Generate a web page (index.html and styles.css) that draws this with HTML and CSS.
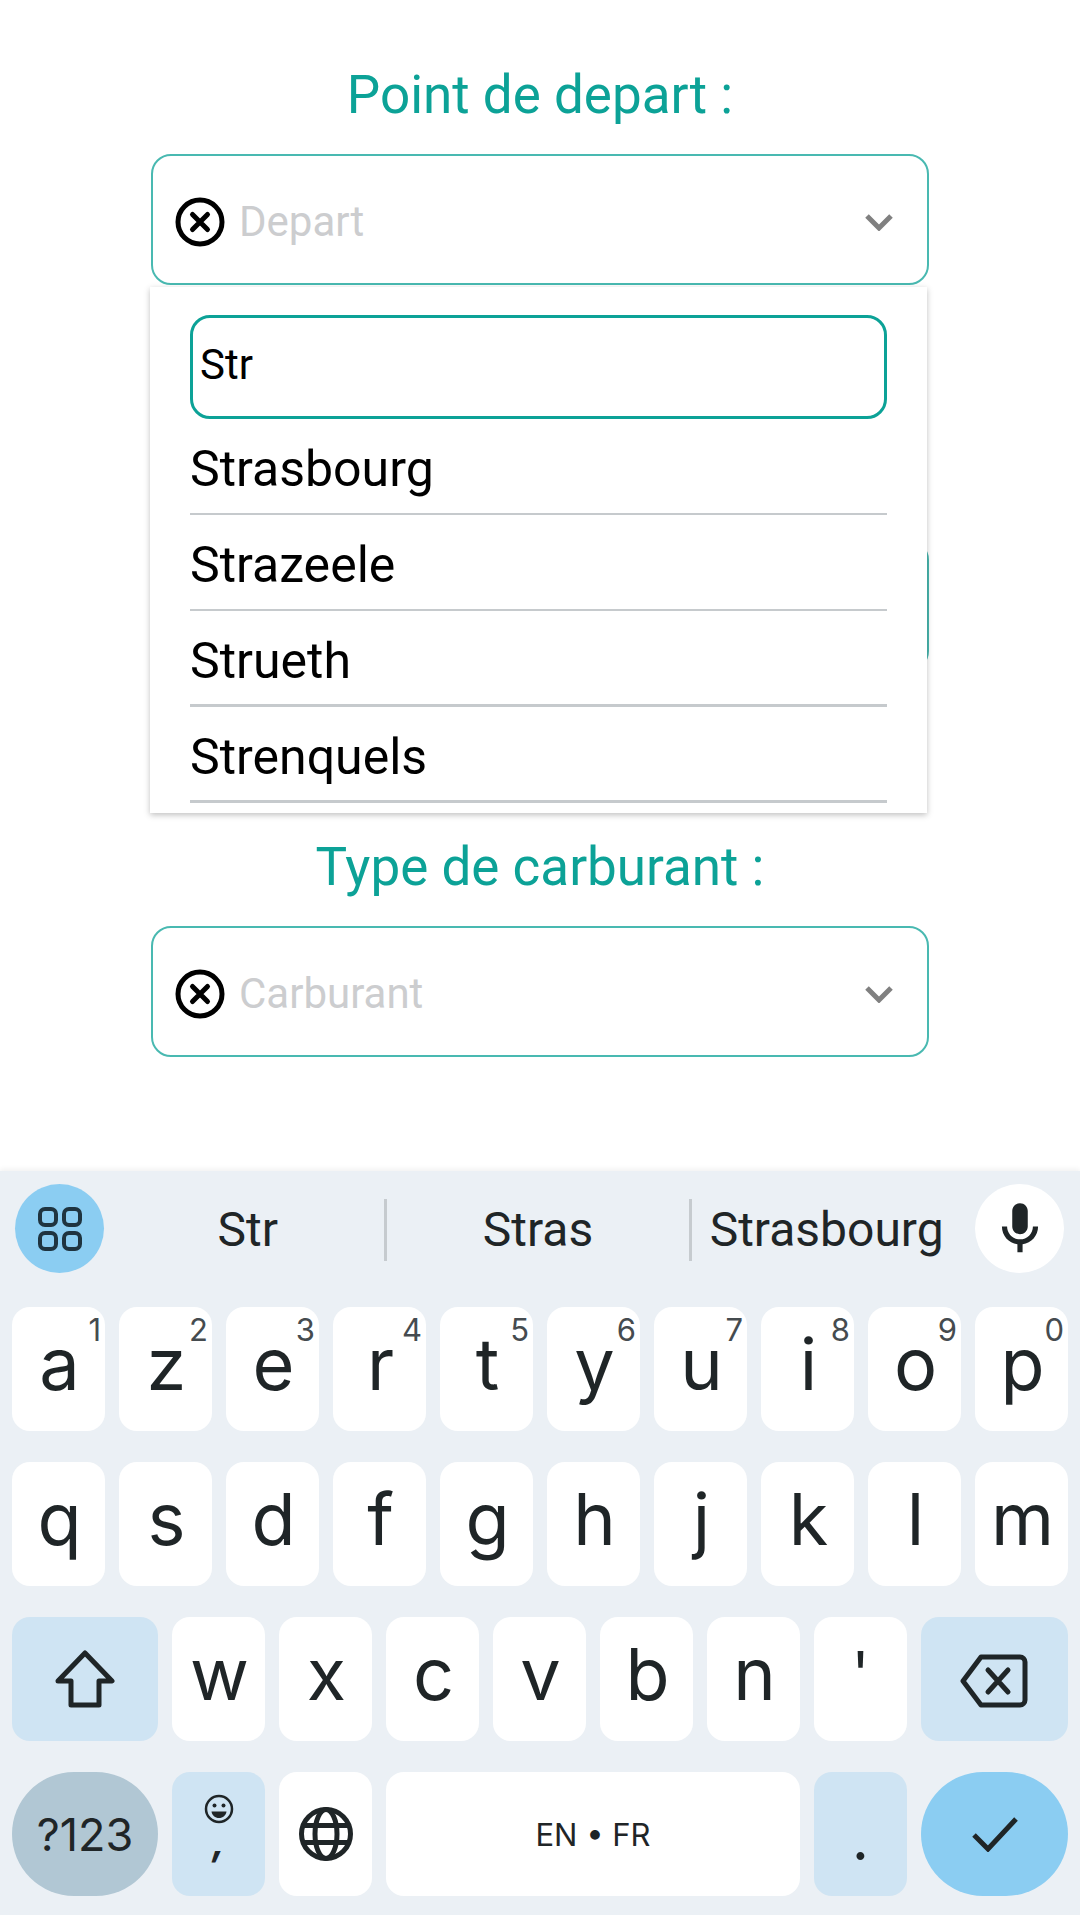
FILE: index.html
```html
<!DOCTYPE html>
<html>
  <head>
    <title>Point de depart</title>
    <link rel="stylesheet" href="styles.css">
  </head>
  <body>
    <main class="form">
      <section class="group group-depart">
        <h2 class="label">Point de depart :</h2>
        <div class="field">
          <svg class="clear" viewBox="0 0 50 50"><circle cx="25" cy="25" r="22" /><path d="M17.5 17.5l15 15M32.5 17.5l-15 15" /></svg>
          <span class="placeholder">Depart</span>
          <svg class="chevron" viewBox="0 0 30 18"><path d="M3 3l12 12L27 3" /></svg>
        </div>
      </section>
      <section class="group group-arrivee">
        <div class="field">
          <span class="placeholder"></span>
        </div>
      </section>
      <section class="group group-carburant">
        <h2 class="label">Type de carburant :</h2>
        <div class="field">
          <svg class="clear" viewBox="0 0 50 50"><circle cx="25" cy="25" r="22" /><path d="M17.5 17.5l15 15M32.5 17.5l-15 15" /></svg>
          <span class="placeholder">Carburant</span>
          <svg class="chevron" viewBox="0 0 30 18"><path d="M3 3l12 12L27 3" /></svg>
        </div>
      </section>

      <div class="dropdown">
        <div class="search">Str</div>
        <div class="option">Strasbourg</div>
        <div class="option">Strazeele</div>
        <div class="option option-thick">Strueth</div>
        <div class="option option-thick">Strenquels</div>
      </div>
    </main>

    <div class="keyboard">
      <div class="suggestions">
        <div class="round round-apps">
          <svg class="icon-apps" viewBox="0 0 44 44"><rect x="2" y="2" width="16" height="16" rx="5" /><rect x="26" y="2" width="16" height="16" rx="5" /><rect x="2" y="26" width="16" height="16" rx="5" /><rect x="26" y="26" width="16" height="16" rx="5" /></svg>
        </div>
        <div class="word word-first">Str</div>
        <div class="word word-second">Stras</div>
        <div class="word word-third">Strasbourg</div>
        <div class="round round-mic">
          <svg class="icon-mic" viewBox="0 0 24 24"><path d="M12 14c1.66 0 3-1.34 3-3V5c0-1.66-1.34-3-3-3S9 3.34 9 5v6c0 1.66 1.34 3 3 3zm5-3c0 2.76-2.24 5-5 5s-5-2.24-5-5H5c0 3.53 2.61 6.43 6 6.92V21h2v-3.08c3.39-.49 6-3.39 6-6.92h-2z" /></svg>
        </div>
      </div>

      <div class="row">
        <div class="key">a<sup class="hint">1</sup></div>
        <div class="key">z<sup class="hint">2</sup></div>
        <div class="key">e<sup class="hint">3</sup></div>
        <div class="key">r<sup class="hint">4</sup></div>
        <div class="key">t<sup class="hint">5</sup></div>
        <div class="key">y<sup class="hint">6</sup></div>
        <div class="key">u<sup class="hint">7</sup></div>
        <div class="key">i<sup class="hint">8</sup></div>
        <div class="key">o<sup class="hint">9</sup></div>
        <div class="key">p<sup class="hint">0</sup></div>
      </div>
      <div class="row">
        <div class="key">q</div>
        <div class="key">s</div>
        <div class="key">d</div>
        <div class="key">f</div>
        <div class="key">g</div>
        <div class="key">h</div>
        <div class="key">j</div>
        <div class="key">k</div>
        <div class="key">l</div>
        <div class="key">m</div>
      </div>
      <div class="row">
        <div class="key key-wide key-mod">
          <svg class="icon-shift" viewBox="0 0 60 58"><path d="M30 3L57 31H44V55H16V31H3z" /></svg>
        </div>
        <div class="key">w</div>
        <div class="key">x</div>
        <div class="key">c</div>
        <div class="key">v</div>
        <div class="key">b</div>
        <div class="key">n</div>
        <div class="key key-apos">'</div>
        <div class="key key-wide key-mod">
          <svg class="icon-back" viewBox="0 0 68 54"><path d="M21 3H60a5 5 0 0 1 5 5V46a5 5 0 0 1-5 5H21L3 27z" /><path d="M28 16l20 22M48 16L28 38" /></svg>
        </div>
      </div>
      <div class="row">
        <div class="key key-wide key-pill key-sym">?123</div>
        <div class="key key-mod key-emoji">
          <svg class="icon-smile" viewBox="0 0 30 30"><circle cx="15" cy="15" r="13" /><circle class="solid" cx="10.5" cy="11.5" r="2" /><circle class="solid" cx="19.5" cy="11.5" r="2" /><path class="solid" d="M7.5 17.5h15c-.6 4-3.6 6.5-7.500 6.500s-6.900-2.500-7.500-6.500z" /></svg>
          <span class="comma">,</span>
        </div>
        <div class="key key-globe">
          <svg class="icon-globe" viewBox="0 0 54 54"><circle cx="27" cy="27" r="24.500" /><ellipse cx="27" cy="27" rx="11" ry="24.500" /><path d="M4 18.500h46M4 35.500h46" /></svg>
        </div>
        <div class="key key-space">EN • FR</div>
        <div class="key key-mod key-dot">.</div>
        <div class="key key-wide key-pill key-ok">
          <svg class="icon-check" viewBox="0 0 48 36"><path d="M3 19l14 14L45 3" /></svg>
        </div>
      </div>
    </div>
  </body>
</html>
```

FILE: styles.css
```css
* {
  box-sizing: border-box;
}
html,
body {
  margin: 0;
  height: 1915px;
  overflow: hidden;
}
body {
  display: flex;
  flex-direction: column;
  background: #fff;
  font-family: Roboto, sans-serif;
}

.form {
  position: relative;
  flex: none;
  height: 1171px;
  padding: 0 151px;
}
.label {
  margin: 0 0 29px;
  height: 60px;
  line-height: 60px;
  text-align: center;
  font-size: 53px;
  font-weight: 400;
  color: #0ca297;
}
.group-depart {
  padding-top: 65px;
}
.group-arrivee {
  padding-top: 255px;
}
.group-carburant {
  padding-top: 166px;
}
.field {
  display: flex;
  align-items: center;
  height: 131px;
  padding: 4px 33px 0 22px;
  border: 2px solid #49b9b1;
  border-radius: 20px;
}
.clear {
  width: 50px;
  height: 50px;
  margin-right: 14px;
  fill: none;
  stroke: #000;
  stroke-width: 5;
  stroke-linecap: round;
}
.placeholder {
  flex: 1;
  font-size: 42px;
  color: #cccdcf;
}
.chevron {
  width: 30px;
  height: 18px;
  fill: none;
  stroke: #808080;
  stroke-width: 5;
}

.dropdown {
  position: absolute;
  top: 287px;
  left: 150px;
  width: 777px;
  height: 526px;
  padding: 28px 40px 0;
  background: #fff;
  box-shadow: 0 2px 6px rgba(0, 0, 0, .25);
}
.search {
  height: 104px;
  padding-left: 7px;
  border: 3px solid #0ca297;
  border-radius: 20px;
  font-size: 42px;
  line-height: 94px;
  color: #000;
}
.option {
  height: 96px;
  padding-top: 21px;
  border-bottom: 2px solid #c6cacd;
  font-size: 50px;
  line-height: 58px;
  color: #000;
}
.option:first-of-type {
  height: 95px;
}
.option-thick {
  border-bottom-width: 3px;
}

.keyboard {
  flex: 1;
  padding: 13px 12px 0;
  background: #ebf0f5;
  box-shadow: 0 -2px 5px rgba(0, 0, 0, .06);
  color: #1f2527;
}
.suggestions {
  display: flex;
  align-items: center;
  height: 89px;
  margin-bottom: 34px;
  padding: 0 4px 0 3px;
}
.round {
  display: flex;
  align-items: center;
  justify-content: center;
  flex: none;
  width: 89px;
  height: 89px;
  border-radius: 50%;
}
.round-apps {
  background: #8bcdf2;
}
.round-mic {
  background: #fff;
}
.icon-apps {
  width: 44px;
  height: 44px;
  fill: none;
  stroke: #1f3440;
  stroke-width: 4;
}
.icon-mic {
  width: 62px;
  height: 62px;
  fill: #1f2527;
}
.word {
  height: 62px;
  margin-top: 2px;
  font-size: 48px;
  line-height: 62px;
  text-align: center;
}
.word-first {
  width: 283px;
  padding-left: 8px;
  border-right: 3px solid #c6cbcf;
}
.word-second {
  width: 306px;
  border-right: 3px solid #c6cbcf;
}
.word-third {
  width: 269px;
  margin-right: 14px;
}

.row {
  display: flex;
  gap: 14px;
  height: 124px;
  margin-bottom: 31px;
}
.key {
  position: relative;
  display: flex;
  flex-direction: column;
  align-items: center;
  justify-content: center;
  width: 93px;
  padding: 0 0 12px 2px;
  border-radius: 18px;
  background: #fff;
  font-family: Inter, sans-serif;
  font-size: 72px;
}
.key-wide,
.key-globe {
  padding: 0;
}
.key-wide {
  flex: none;
  width: 146px;
}
.key-wide:last-child {
  width: 147px;
}
.key-space {
  flex: 1;
  padding: 0;
  font-size: 31px;
}
.key-mod {
  background: #cfe4f3;
}
.key-pill {
  border-radius: 62px;
}
.key-sym {
  background: #b1c7d4;
  font-size: 45px;
}
.key-ok {
  background: #8bcdf2;
}
.key-apos {
  justify-content: flex-start;
  padding: 20px 0 0;
  font-size: 60px;
}
.key-dot {
  justify-content: flex-end;
  padding: 0 0 22px;
  font-size: 60px;
}
.key-emoji {
  justify-content: flex-start;
  padding: 22px 0 0;
}
.comma {
  font-size: 38px;
  line-height: 34px;
  font-weight: 700;
  font-style: italic;
}
.hint {
  position: absolute;
  top: 5px;
  right: 4px;
  font-size: 31px;
  line-height: 36px;
  color: #454b4f;
}
.icon-shift,
.icon-back,
.icon-check {
  fill: none;
  stroke: #1f2527;
  stroke-width: 5;
  stroke-linejoin: round;
}
.icon-shift {
  width: 60px;
  height: 58px;
}
.icon-back {
  width: 68px;
  height: 54px;
  margin: 4px 0 0 -2px;
}
.icon-back path + path {
  stroke-linecap: round;
}
.icon-check {
  width: 48px;
  height: 36px;
  stroke-linejoin: miter;
}
.icon-smile {
  width: 30px;
  height: 30px;
  fill: none;
  stroke: #1f2527;
  stroke-width: 2.500;
}
.icon-smile .solid {
  fill: #1f2527;
  stroke: none;
}
.icon-globe {
  width: 54px;
  height: 54px;
  fill: none;
  stroke: #1f2527;
  stroke-width: 5;
}
```
